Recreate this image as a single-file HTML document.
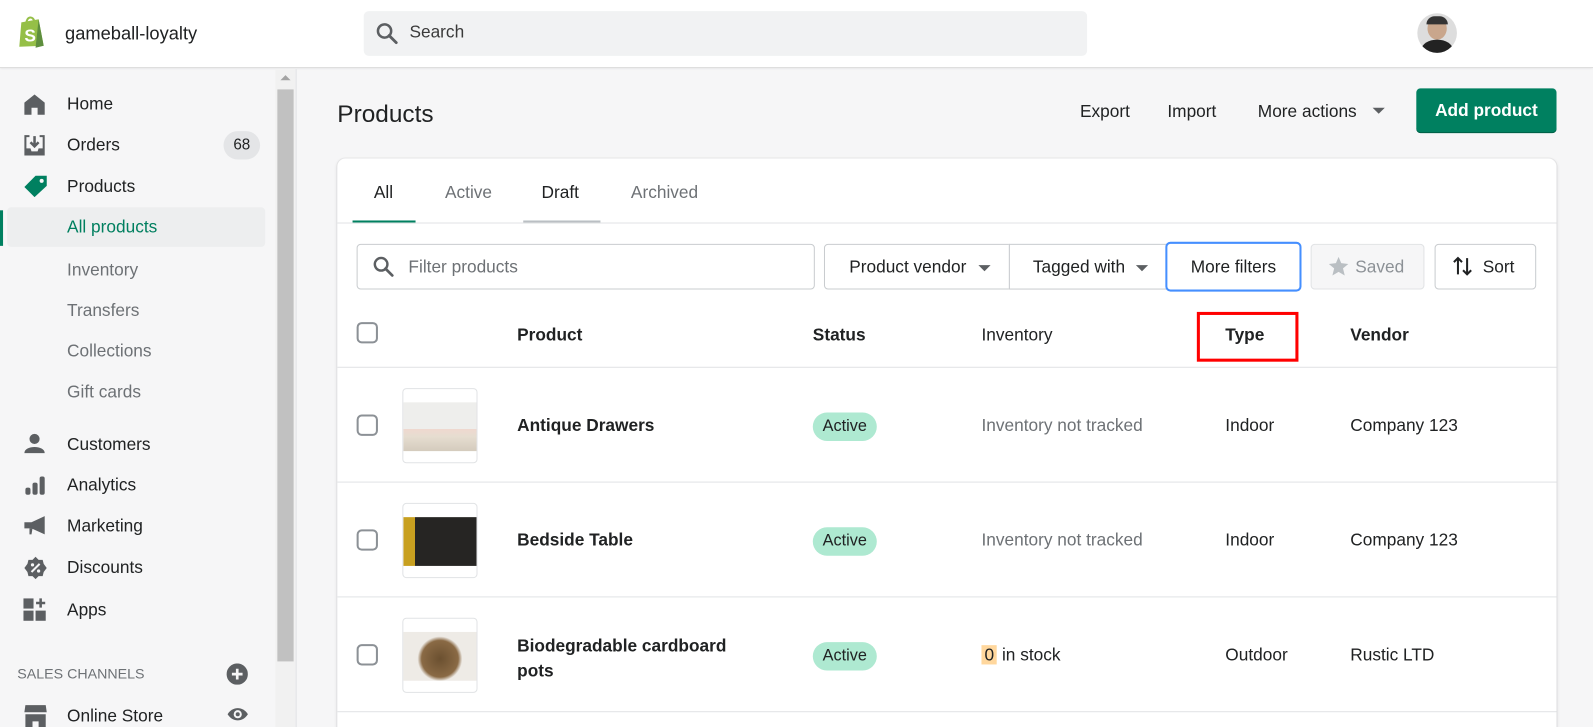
<!DOCTYPE html>
<html style="overflow:hidden;width:1593px;height:727px"><head><style>
*{box-sizing:border-box;margin:0;padding:0}
html,body{overflow:hidden}
body{width:1593px;height:727px;background:#f6f6f7;font-family:"Liberation Sans",Arial,sans-serif;color:#202223;font-size:16px;position:relative}
#w{position:absolute;left:0;top:0;width:1568px;height:716px;transform:scale(1.016);transform-origin:0 0;overflow:hidden}
.top{position:absolute;left:0;top:0;width:1568px;height:67px;background:#fff;border-bottom:1px solid #dcdcdc;box-shadow:0 1px 2px rgba(0,0,0,.08)}
.abs{position:absolute}
.nav{position:absolute;left:66px;font-size:17px;color:#202223}
.sub{position:absolute;left:66px;font-size:17px;color:#6d7175}
.ic{position:absolute;left:23px}
.card{position:absolute;left:332px;top:156px;width:1200px;height:620px;background:#fff;border-radius:8px;box-shadow:0 0 0 1px rgba(63,63,68,.05),0 1px 3px rgba(63,63,68,.15)}
.btn{position:absolute;height:45px;border:1px solid #c9cccf;border-radius:4px;background:#fff;font-size:17px;display:flex;align-items:center;justify-content:center}
.cb{position:absolute;width:21px;height:21px;border:2px solid #8c9196;border-radius:5px;left:19px}
.row{position:absolute;left:0;width:1200px;height:113px;border-top:1px solid #e1e3e5}
.thumb{position:absolute;left:64px;top:20px;width:74px;height:74px;border:1px solid #e1e3e5;border-radius:4px;background:#fff;overflow:hidden}
.thumb>div{position:absolute;left:0;top:13px;width:72px;height:48px}
.pn{position:absolute;left:177px;font-size:17px;font-weight:bold;color:#202223}
.pill{position:absolute;left:468px;top:44px;height:28px;width:63px;border-radius:14px;background:#aee9d1;font-size:16px;display:flex;align-items:center;justify-content:center}
.c{position:absolute;top:47px;font-size:17px}
.th{position:absolute;top:164px;font-size:17px;font-weight:bold}
</style></head><body><div id="w">
<div class="top">
 <svg class="abs" style="left:16px;top:14px" width="30" height="34" viewBox="0 0 30 34"><path d="M5 8 L22 5 L27 31 L3 32 Z" fill="#95bf47"/><path d="M22 5 L27 31 L19 33 Z" fill="#5e8e3e"/><path d="M10 9 C10 2 17 1 18 8" stroke="#95bf47" stroke-width="2" fill="none"/><text x="8" y="27" font-size="17" font-weight="bold" fill="#fff" font-family="Liberation Sans">S</text></svg>
 <div class="abs" style="left:64px;top:23px;font-size:18px">gameball-loyalty</div>
 <div class="abs" style="left:358px;top:11px;width:712px;height:44px;background:#f1f2f3;border-radius:5px"></div>
 <svg class="abs" style="left:370px;top:22px" width="22" height="22" viewBox="0 0 22 22"><circle cx="8.5" cy="8.5" r="6.5" stroke="#5c5f62" stroke-width="2.5" fill="none"/><path d="M13 13 L20 20" stroke="#5c5f62" stroke-width="2.8" stroke-linecap="round"/></svg>
 <div class="abs" style="left:403px;top:22px;font-size:17px;color:#3a3a3a">Search</div>
 <div class="abs" style="left:1395px;top:13px;width:39px;height:39px;border-radius:50%;background:#ddd;overflow:hidden"><div style="position:absolute;left:10px;top:4px;width:19px;height:22px;border-radius:50%;background:#c9a68c"></div><div style="position:absolute;left:9px;top:3px;width:21px;height:8px;border-radius:8px 8px 0 0;background:#333"></div><div style="position:absolute;left:4px;top:26px;width:31px;height:20px;border-radius:50% 50% 0 0;background:#222"></div></div>
</div>
<div class="abs" style="left:271px;top:68px;width:20px;height:660px;background:#f1f1f1"></div>
<div class="abs" style="left:273px;top:88px;width:16px;height:563px;background:#c1c1c1"></div>
<div class="abs" style="left:276px;top:74px;width:0;height:0;border-left:5px solid transparent;border-right:5px solid transparent;border-bottom:5px solid #a3a3a3"></div>
<div class="abs" style="left:291px;top:68px;width:1px;height:660px;background:#e1e3e5"></div>

<svg class="ic" style="top:92px" width="22" height="22" viewBox="0 0 22 22"><path d="M11 1 L21 9 V21 H14 V14 H8 V21 H1 V9 Z" fill="#5c5f62"/></svg>
<div class="nav" style="top:93px">Home</div>
<svg class="ic" style="top:132px" width="22" height="22" viewBox="0 0 22 22"><path d="M1 1 H6 V3 H3 V14 H7 L8 17 H14 L15 14 H19 V3 H16 V1 H21 V21 H1 Z" fill="#5c5f62"/><path d="M11 2 V11 M7 8 L11 12 L15 8" stroke="#5c5f62" stroke-width="2.5" fill="none"/></svg>
<div class="nav" style="top:133px">Orders</div>
<div class="abs" style="left:220px;top:129px;width:36px;height:28px;border-radius:14px;background:#e4e5e7;font-size:15px;text-align:center;line-height:28px">68</div>
<svg class="ic" style="top:172px" width="24" height="22" viewBox="0 0 24 22"><path d="M12 1 H23 V11 L11 22 L1 12 Z" fill="#008060"/><circle cx="18" cy="6" r="2" fill="#f6f6f7"/></svg>
<div class="nav" style="top:174px">Products</div>
<div class="abs" style="left:7px;top:204px;width:254px;height:39px;background:#edeeef;border-radius:4px"></div>
<div class="abs" style="left:0;top:207px;width:3px;height:35px;background:#008060"></div>
<div class="nav" style="top:214px;color:#007f5f">All products</div>
<div class="sub" style="top:256px">Inventory</div>
<div class="sub" style="top:296px">Transfers</div>
<div class="sub" style="top:336px">Collections</div>
<div class="sub" style="top:376px">Gift cards</div>
<svg class="ic" style="top:426px" width="22" height="22" viewBox="0 0 22 22"><circle cx="11" cy="6" r="5" fill="#5c5f62"/><path d="M1 20 C1 12 21 12 21 20 Z" fill="#5c5f62"/></svg>
<div class="nav" style="top:428px">Customers</div>
<svg class="ic" style="top:467px" width="22" height="22" viewBox="0 0 22 22"><rect x="2" y="13" width="5" height="7" rx="2" fill="#5c5f62"/><rect x="9" y="8" width="5" height="12" rx="2" fill="#5c5f62"/><rect x="16" y="2" width="5" height="18" rx="2" fill="#5c5f62"/></svg>
<div class="nav" style="top:468px">Analytics</div>
<svg class="ic" style="top:507px" width="22" height="22" viewBox="0 0 22 22"><path d="M1 7 H8 L21 1 V19 L8 13 H1 Z" fill="#5c5f62"/><path d="M6 13 L9 13 L8 19 H6 Z" fill="#5c5f62"/></svg>
<div class="nav" style="top:508px">Marketing</div>
<svg class="ic" style="top:547px" width="24" height="24" viewBox="0 0 24 24"><path d="M12 1 L15 4 L19 4 L20 8 L23 12 L20 16 L19 20 L15 20 L12 23 L9 20 L5 20 L4 16 L1 12 L4 8 L5 4 L9 4 Z" fill="#5c5f62"/><path d="M8 16 L16 8" stroke="#f6f6f7" stroke-width="2"/><circle cx="9" cy="9" r="1.6" fill="#f6f6f7"/><circle cx="15" cy="15" r="1.6" fill="#f6f6f7"/></svg>
<div class="nav" style="top:549px">Discounts</div>
<svg class="ic" style="top:588px" width="24" height="24" viewBox="0 0 24 24"><rect x="0" y="1" width="10" height="10" fill="#5c5f62"/><rect x="0" y="13" width="10" height="10" fill="#5c5f62"/><rect x="12" y="13" width="10" height="10" fill="#5c5f62"/><path d="M17 1 V10 M12.5 5.5 H21.5" stroke="#5c5f62" stroke-width="2.5"/></svg>
<div class="nav" style="top:591px">Apps</div>
<div class="abs" style="left:17px;top:655px;font-size:14px;color:#6d7175">SALES CHANNELS</div>
<svg class="abs" style="left:223px;top:653px" width="21" height="21" viewBox="0 0 20 20"><circle cx="10" cy="10" r="10" fill="#5c5f62"/><path d="M10 5 V15 M5 10 H15" stroke="#f6f6f7" stroke-width="2.5"/></svg>
<svg class="ic" style="top:693px" width="24" height="24" viewBox="0 0 24 24"><path d="M2 1 H22 L23 8 H1 Z" fill="#5c5f62"/><path d="M2 10 H22 V24 H15 V17 H9 V24 H2 Z" fill="#5c5f62"/></svg>
<div class="nav" style="top:695px">Online Store</div>
<svg class="abs" style="left:223px;top:695px" width="22" height="16" viewBox="0 0 22 16"><path d="M1 8 C6 0 16 0 21 8 C16 16 6 16 1 8 Z" fill="#5c5f62"/><circle cx="11" cy="8" r="4" fill="#f6f6f7"/><circle cx="11" cy="8" r="2" fill="#5c5f62"/></svg>

<div class="abs" style="left:332px;top:99px;font-size:24px">Products</div>
<div class="abs" style="left:1063px;top:100px;font-size:17px">Export</div>
<div class="abs" style="left:1149px;top:100px;font-size:17px">Import</div>
<div class="abs" style="left:1238px;top:100px;font-size:17px">More actions</div>
<div class="abs" style="left:1351px;top:106px;border-left:6px solid transparent;border-right:6px solid transparent;border-top:6px solid #5c5f62"></div>
<div class="abs" style="left:1394px;top:87px;width:138px;height:44px;background:#008060;border-radius:4px;color:#fff;font-weight:bold;font-size:17px;text-align:center;line-height:44px;box-shadow:inset 0 -1px 0 #005e46">Add product</div>

<div class="card">
 <div class="abs" style="left:36px;top:24px;font-size:17px">All</div>
 <div class="abs" style="left:15px;top:61px;width:62px;height:3px;background:#008060"></div>
 <div class="abs" style="left:106px;top:24px;font-size:17px;color:#6d7175">Active</div>
 <div class="abs" style="left:201px;top:24px;font-size:17px;color:#202223">Draft</div>
 <div class="abs" style="left:183px;top:61px;width:76px;height:3px;background:#babfc3"></div>
 <div class="abs" style="left:289px;top:24px;font-size:17px;color:#6d7175">Archived</div>
 <div class="abs" style="left:0;top:63px;width:1200px;height:1px;background:#e1e3e5"></div>

 <div class="btn" style="left:19px;top:84px;width:451px;justify-content:flex-start;padding-left:50px;color:#6d7175">Filter products</div>
 <svg class="abs" style="left:35px;top:96px" width="21" height="21" viewBox="0 0 22 22"><circle cx="8.5" cy="8.5" r="6.5" stroke="#5c5f62" stroke-width="2.5" fill="none"/><path d="M13 13 L20 20" stroke="#5c5f62" stroke-width="2.8" stroke-linecap="round"/></svg>
 <div class="btn" style="left:479px;top:84px;width:183px;border-radius:4px 0 0 4px;padding-right:18px">Product vendor</div>
 <div class="abs" style="left:631px;top:105px;border-left:6px solid transparent;border-right:6px solid transparent;border-top:6px solid #5c5f62"></div>
 <div class="btn" style="left:661px;top:84px;width:156px;border-radius:0;padding-right:18px">Tagged with</div>
 <div class="abs" style="left:786px;top:105px;border-left:6px solid transparent;border-right:6px solid transparent;border-top:6px solid #5c5f62"></div>
 <div class="btn" style="left:815px;top:82px;width:134px;height:49px;border:2px solid #458fff;border-radius:5px">More filters</div>
 <div class="btn" style="left:958px;top:84px;width:112px;background:#f6f6f7;color:#8c9196;border-color:#e1e3e5;padding-left:24px">Saved</div>
 <svg class="abs" style="left:975px;top:96px" width="21" height="20" viewBox="0 0 24 23"><path d="M12 1 L15 8 L23 9 L17 14 L19 22 L12 18 L5 22 L7 14 L1 9 L9 8 Z" fill="#babfc3"/></svg>
 <div class="btn" style="left:1080px;top:84px;width:100px;padding-left:26px">Sort</div>
 <svg class="abs" style="left:1097px;top:95px" width="22" height="22" viewBox="0 0 22 22"><path d="M6 19 V3 M2 7 L6 3 L10 7 M15 3 V19 M11 15 L15 19 L19 15" stroke="#202223" stroke-width="2" fill="none"/></svg>

 <div class="cb" style="top:161px"></div>
 <div class="th" style="left:177px">Product</div>
 <div class="th" style="left:468px">Status</div>
 <div class="th" style="left:634px;font-weight:normal">Inventory</div>
 <div class="th" style="left:874px">Type</div>
 <div class="abs" style="left:846px;top:151px;width:100px;height:49px;border:3px solid #f00"></div>
 <div class="th" style="left:997px">Vendor</div>

 <div class="row" style="top:205px">
  <div class="cb" style="top:46px"></div>
  <div class="thumb"><div style="background:linear-gradient(#eeeeec 55%,#efd8cf 55%,#e6ddd0 70%,#d4cbbd)"></div></div>
  <div class="pn" style="top:47px">Antique Drawers</div>
  <div class="pill">Active</div>
  <div class="c" style="left:634px;color:#6d7175">Inventory not tracked</div>
  <div class="c" style="left:874px">Indoor</div>
  <div class="c" style="left:997px">Company 123</div>
 </div>
 <div class="row" style="top:318px">
  <div class="cb" style="top:46px"></div>
  <div class="thumb"><div style="background:linear-gradient(90deg,#c8a020 0,#c8a020 16%,#262523 16%);"></div></div>
  <div class="pn" style="top:47px">Bedside Table</div>
  <div class="pill">Active</div>
  <div class="c" style="left:634px;color:#6d7175">Inventory not tracked</div>
  <div class="c" style="left:874px">Indoor</div>
  <div class="c" style="left:997px">Company 123</div>
 </div>
 <div class="row" style="top:431px">
  <div class="cb" style="top:46px"></div>
  <div class="thumb"><div style="background:radial-gradient(circle at 50% 55%,#6b5030 0,#8a6a45 18px,#eeebe6 22px)"></div></div>
  <div class="pn" style="top:35px;line-height:25px">Biodegradable cardboard<br>pots</div>
  <div class="pill">Active</div>
  <div class="c" style="left:634px"><span style="background:#ffd79d;padding:0 3px">0</span> in stock</div>
  <div class="c" style="left:874px">Outdoor</div>
  <div class="c" style="left:997px">Rustic LTD</div>
 </div>
 <div class="row" style="top:544px"></div>
</div>
</div></body></html>
